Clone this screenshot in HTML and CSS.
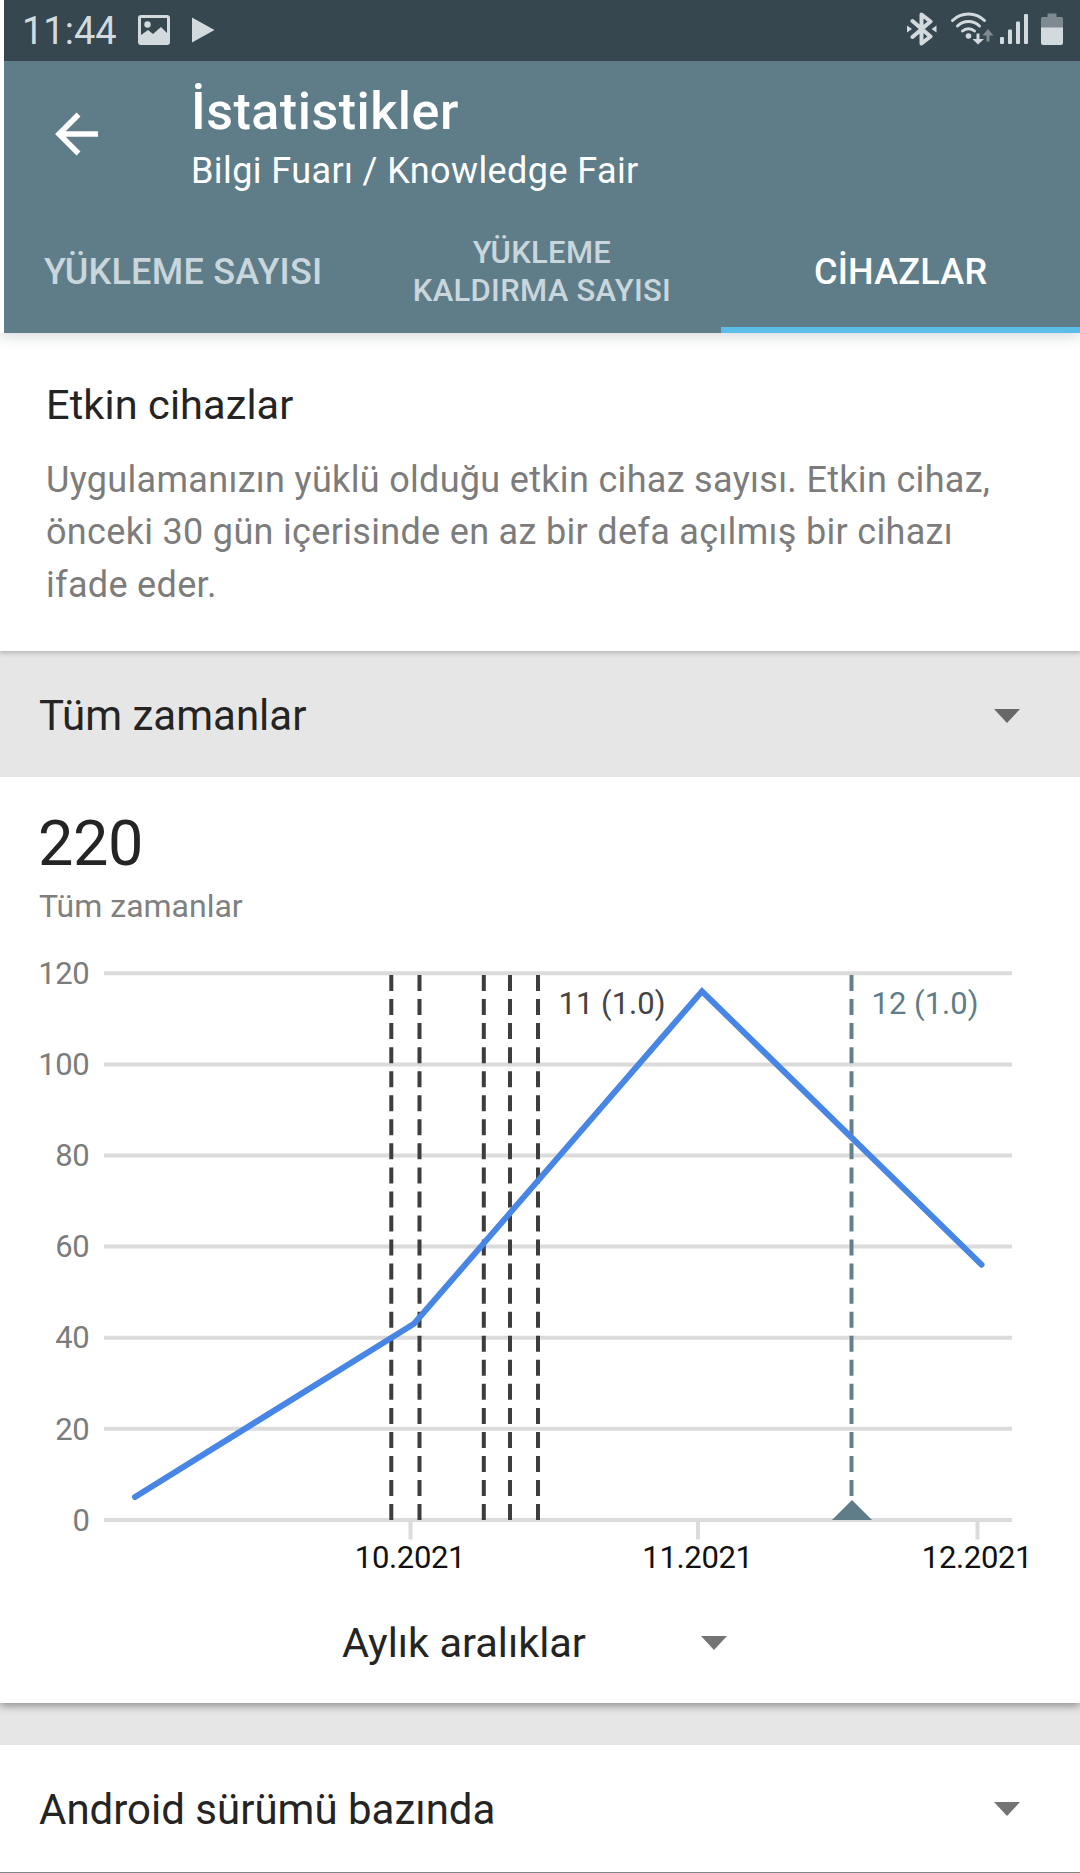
FILE: index.html
```html
<!DOCTYPE html>
<html lang="tr">
<head>
<meta charset="utf-8">
<title>İstatistikler</title>
<link rel="stylesheet" href="styles.css">
</head>
<body>
<div class="screen">
  <header class="header">
    <div class="status">
      <div class="status-group">
        <span class="clock">11:44</span>
        <svg class="icon-picture" width="32" height="30" viewBox="0 0 32 30">
          <path fill-rule="evenodd" d="M3 0h26a3 3 0 0 1 3 3v24a3 3 0 0 1-3 3H3a3 3 0 0 1-3-3V3a3 3 0 0 1 3-3zM3 3v17l7-5 5 4 8-7 6 6V3z"/>
          <circle cx="9.500" cy="9.500" r="3.200"/>
        </svg>
        <svg class="icon-play" width="23" height="26" viewBox="0 0 23 26"><path d="M0 .5 22.500 13 0 25.500z"/></svg>
      </div>
      <div class="status-group status-right">
        <svg width="30" height="34" viewBox="0 0 30 34">
          <path class="line" stroke-width="4" d="M5.500 9 23.500 24.500 14.500 31.500V2.500L23.500 9.500 5.500 25"/>
          <path d="M0 13.500 5 17 0 20.500zM29.500 13.500 24.500 17l5 3.500z"/>
        </svg>
        <svg class="icon-wifi" width="42" height="34" viewBox="0 0 42 34">
          <path class="line" stroke-width="3" d="M1.500 8.500a23 23 0 0 1 32 0M6.500 14a16 16 0 0 1 22 0M11.500 19a9 9 0 0 1 12 0"/>
          <circle cx="17.500" cy="24" r="2.800"/>
          <path d="M25.500 21.500h3v5.500h4.500L27 32.500 21.500 27h4z"/>
          <path class="dim" d="M35.500 29.500h3v-6h4L37 17l-5.500 6.500h4z"/>
        </svg>
        <svg class="icon-signal" width="28" height="34" viewBox="0 0 28 34">
          <rect x="0" y="25" width="4" height="7" rx="1"/><rect x="8" y="17.500" width="4" height="14.500" rx="1"/>
          <rect x="16" y="9.500" width="4" height="22.500" rx="1"/><rect x="24" y="2" width="4" height="30" rx="1"/>
        </svg>
        <svg class="icon-battery" width="22" height="34" viewBox="0 0 22 34">
          <path class="dim" d="M6.500 1.500h9V5H20a2 2 0 0 1 2 2v9H0V7a2 2 0 0 1 2-2h4.500z"/>
          <path d="M0 15.500h22V31a2 2 0 0 1-2 2H2a2 2 0 0 1-2-2z"/>
        </svg>
      </div>
    </div>
    <div class="toolbar">
      <svg class="back" width="44" height="44" viewBox="0 0 44 44"><path d="M43 22H4M23.500 2.500 4 22l19.500 19.500"/></svg>
      <div class="titles">
        <h1 class="title">İstatistikler</h1>
        <p class="subtitle">Bilgi Fuarı / Knowledge Fair</p>
      </div>
    </div>
    <nav class="tabs">
      <div class="tab">YÜKLEME SAYISI</div>
      <div class="tab tab-small">YÜKLEME<br>KALDIRMA SAYISI</div>
      <div class="tab tab-active">CİHAZLAR</div>
    </nav>
  </header>

  <section class="intro">
    <h2 class="intro-title">Etkin cihazlar</h2>
    <p class="intro-text">Uygulamanızın yüklü olduğu etkin cihaz sayısı. Etkin cihaz,<br>önceki 30 gün içerisinde en az bir defa açılmış bir cihazı<br>ifade eder.</p>
  </section>

  <div class="select range">
    <span>Tüm zamanlar</span>
    <svg class="caret" width="26" height="14" viewBox="0 0 26 14"><path d="M0 0h26L13 14z"/></svg>
  </div>

  <section class="card">
    <div class="total">220</div>
    <div class="total-label">Tüm zamanlar</div>
    <svg class="chart" width="1080" height="650" viewBox="0 940 1080 650">
      <path class="grid" d="M104 973.300H1012M104 1064.400H1012M104 1155.500H1012M104 1246.600H1012M104 1337.700H1012M104 1428.800H1012M104 1519.900H1012M410.500 1520v19.500M698 1520v19.500M977.500 1520v19.500"/>
      <g class="y-labels">
        <text x="89.500" y="984">120</text><text x="89.500" y="1075">100</text><text x="89.500" y="1166">80</text>
        <text x="89.500" y="1257">60</text><text x="89.500" y="1348">40</text><text x="89.500" y="1439.500">20</text><text x="89.500" y="1530.500">0</text>
      </g>
      <path class="release" d="M391.300 975V1520M419.500 975V1520M483.800 975V1520M510 975V1520M538 975V1520"/>
      <path class="release current" d="M851.500 975V1500"/>
      <path class="marker" d="M832 1520 852 1500 872 1520z"/>
      <text class="release-label" x="558.500" y="1014">11 (1.0)</text>
      <text class="release-label current-label" x="871.500" y="1014">12 (1.0)</text>
      <polyline class="series" points="135,1497 414,1323.800 702,991.300 981.500,1264.700"/>
      <g class="x-labels">
        <text x="410" y="1568">10.2021</text><text x="697.500" y="1568">11.2021</text><text x="977" y="1568">12.2021</text>
      </g>
    </svg>
    <div class="interval">
      <span>Aylık aralıklar</span>
      <svg class="caret" width="26" height="14" viewBox="0 0 26 14"><path d="M0 0h26L13 14z"/></svg>
    </div>
  </section>

  <div class="select breakdown">
    <span>Android sürümü bazında</span>
    <svg class="caret" width="26" height="14" viewBox="0 0 26 14"><path d="M0 0h26L13 14z"/></svg>
  </div>
</div>
</body>
</html>
```
FILE: styles.css
```css
* { box-sizing: border-box; margin: 0; padding: 0; }
body { background: #e6e6e6; font-family: Roboto, "Liberation Sans", sans-serif; color: #242424; }
svg { display: block; flex: none; }
.screen { width: 1080px; height: 1873px; display: flex; flex-direction: column; overflow: hidden; border-bottom: 1px solid #858585; }

.header { border-left: 4px solid #fff; height: 333px; flex: none; background: #5f7d89; box-shadow: 0 3px 13px rgba(60, 75, 80, .22); z-index: 1; }
.status { height: 61px; background: #36474f; display: flex; justify-content: space-between; padding: 0 17px 0 18px; fill: #d3dadd; }
.status-group { display: flex; align-items: flex-start; }
.clock { font-size: 38px; line-height: 61px; padding-top: 1px; color: #d3dadd; width: 116px; }
.icon-picture { margin-top: 15px; }
.icon-play { margin: 17px 0 0 22px; }
.status-right { padding-top: 12px; }
.icon-wifi { margin-left: 14px; overflow: visible; }
.icon-signal { margin-left: 7px; }
.icon-battery { margin-left: 13px; }
.line { fill: none; stroke: #d3dadd; stroke-linejoin: round; stroke-linecap: round; }
.dim { fill: #7e8a90; }

.toolbar { height: 150px; display: flex; padding-left: 51px; }
.back { margin-top: 51px; fill: none; stroke: #fff; stroke-width: 5.500; }
.titles { margin-left: 92px; padding-top: 21px; color: #fff; }
.title { font-size: 52px; line-height: 60px; font-weight: 500; letter-spacing: .5px; }
.subtitle { font-size: 36px; line-height: 44px; margin-top: 7px; letter-spacing: .4px; }

.tabs { height: 122px; display: grid; grid-template-columns: repeat(3, 1fr); }
.tab { display: flex; align-items: center; justify-content: center; text-align: center; font-size: 36px; font-weight: 500; letter-spacing: .25px; color: #c9d6dc; }
.tab-small { font-size: 31px; line-height: 38px; letter-spacing: .3px; }
.tab-active { color: #fff; box-shadow: inset 0 -6px #5bbde8; }

.intro { height: 318px; flex: none; background: #fff; padding: 47px 46px 0; box-shadow: 0 2px 5px rgba(0, 0, 0, .22); position: relative; }
.intro-title { font-size: 41.500px; line-height: 50px; font-weight: 400; letter-spacing: .1px; }
.intro-text { font-size: 36px; line-height: 52.300px; margin-top: 24px; color: #7c7c7c; white-space: nowrap; letter-spacing: .32px; }

.select { display: flex; align-items: center; justify-content: space-between; font-size: 42px; padding: 0 60px 0 39px; }
.caret { fill: #747474; }
.range { height: 126px; flex: none; padding-top: 3px; }
.range .caret { fill: #686868; }

.card { height: 926px; flex: none; background: #fff; box-shadow: 0 3px 8px rgba(0, 0, 0, .38); clip-path: inset(0 0 -14px); }
.total { font-size: 63px; line-height: 70px; padding: 32px 0 0 38px; letter-spacing: -.4px; }
.total-label { font-size: 32px; line-height: 40px; padding-left: 39px; margin-top: 7px; color: #808080; }
.chart { margin-top: 14px; }
.chart text { font-size: 31px; }
.grid { stroke: #dbdbdb; stroke-width: 4; }
.y-labels { text-anchor: end; fill: #7c7c7c; letter-spacing: -.3px; }
.x-labels { text-anchor: middle; fill: #111; letter-spacing: -.35px; }
.release { stroke: #3d3d3d; stroke-width: 4; stroke-dasharray: 16 8.050; }
.current { stroke: #64808a; }
.marker { fill: #5f7d88; }
.release-label { fill: #444; }
.current-label { fill: #5f7d88; }
.series { fill: none; stroke: #4886e5; stroke-width: 6; stroke-linecap: round; }
.interval { display: flex; align-items: center; font-size: 41.500px; line-height: 50px; padding-left: 342px; margin-top: 28px; }
.interval span { width: 359px; }

.breakdown { flex: 1; margin-top: 42px; background: #fff; padding-top: 1px; }
```
